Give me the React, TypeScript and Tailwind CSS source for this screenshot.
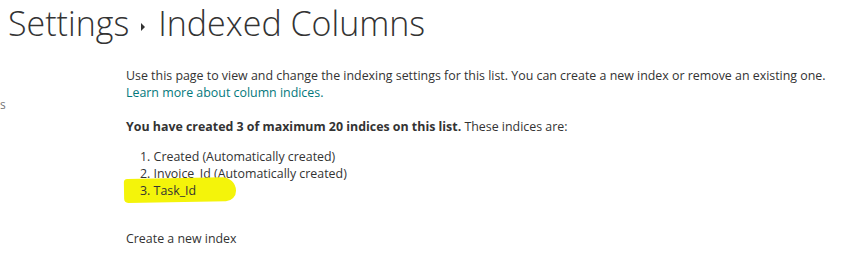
export default function App() {
  const items = [
    'Created (Automatically created)',
    'Invoice_Id (Automatically created)',
  ];

  return (
    <div className="relative w-[864px] h-[265px] overflow-hidden bg-white text-[#333333] font-['Open_Sans',sans-serif]">
      {/* page title */}
      <h1 className="flex items-center pl-[8px] text-[34px] leading-[47px] font-light text-[#333333]">
        <span>Settings</span>
        <span className="ml-[12px] mr-[13px] mt-[6px] inline-block w-0 h-0 border-y-[4px] border-y-transparent border-l-[4px] border-l-[#333333]" />
        <span>Indexed Columns</span>
      </h1>

      {/* cut-off left nav */}
      <div className="absolute left-0 top-[96px] text-[12px] text-[#777777]">s</div>

      <div className="pl-[126px] pt-[20px] text-[12.4px] leading-[17px]">
        <p>Use this page to view and change the indexing settings for this list. You can create a new index or remove an existing one.</p>
        <a className="text-[#03787c]">Learn more about column indices.</a>

        <p className="mt-[17px]">
          <span className="font-bold">You have created 3 of maximum 20 indices on this list.</span> These indices are:
        </p>

        <ol className="mt-[13px] pl-[14px]">
          {items.map((it, i) => (
            <li key={i}>{i + 1}. {it}</li>
          ))}
          <li className="relative">
            <span className="absolute left-[-16px] top-[-4px] w-[112px] h-[24px] bg-[#f4f40a] rounded-[10px_40px_30px_12px] -rotate-1" />
            <span className="relative">3. Task_Id</span>
          </li>
        </ol>

        <p className="mt-[31px]">Create a new index</p>
      </div>
    </div>
  );
}
